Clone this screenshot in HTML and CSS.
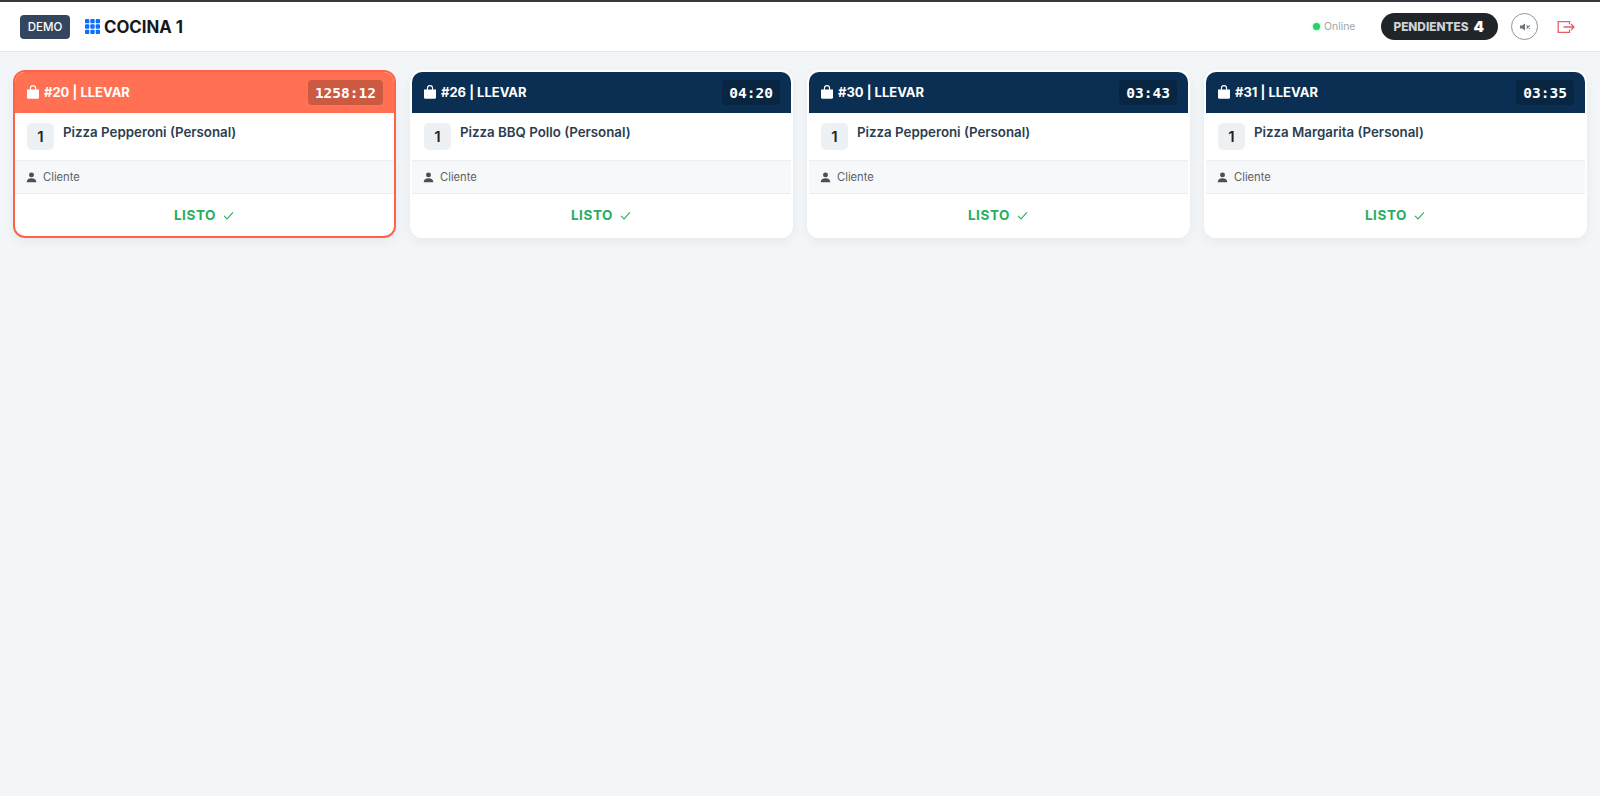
FILE: index.html
```html
<!DOCTYPE html>
<html>
    <head>
        <meta charset="utf-8">
        <title>Cocina 1</title>
        <link rel="stylesheet" href="styles.css">
    </head>
    <body>
        <header class="topbar">
            <div class="topbar-left">
                <span class="demo">DEMO</span>
                <h1 class="title">
                    <svg class="grid-icon" viewBox="0 0 16 16" width="15" height="15" fill="#0d6efd">
                        <rect x="0" y="0" width="4.6" height="4.6" rx="1"/><rect x="5.700" y="0" width="4.6" height="4.6" rx="1"/><rect x="11.400" y="0" width="4.6" height="4.6" rx="1"/>
                        <rect x="0" y="5.700" width="4.6" height="4.6" rx="1"/><rect x="5.700" y="5.700" width="4.6" height="4.6" rx="1"/><rect x="11.400" y="5.700" width="4.6" height="4.6" rx="1"/>
                        <rect x="0" y="11.400" width="4.6" height="4.6" rx="1"/><rect x="5.700" y="11.400" width="4.6" height="4.6" rx="1"/><rect x="11.400" y="11.400" width="4.6" height="4.6" rx="1"/>
                    </svg>
                    COCINA 1
                </h1>
            </div>
            <div class="topbar-right">
                <span class="status"><i class="dot"></i>Online</span>
                <span class="pending">PENDIENTES <b>4</b></span>
                <button class="sound" type="button">
                    <svg viewBox="0 0 16 16" width="14" height="14" fill="#6c757d">
                        <path d="M2.300 6.200H4.600L8 4v8L4.600 9.800H2.300z"/>
                        <path d="M9.800 6.200l3.600 3.600M13.400 6.200l-3.600 3.600" stroke="#6c757d" stroke-width="1.200" fill="none"/>
                    </svg>
                </button>
                <svg class="logout" viewBox="0 0 18 14" width="18" height="14" fill="none" stroke="#e85d6c" stroke-width="1.300">
                    <path d="M12.500 4.300V1.700H1.200v10.600h11.300V9.700"/>
                    <path d="M6.500 7H17M14 4l3 3-3 3"/>
                </svg>
            </div>
        </header>

        <main class="orders">
            <article class="card late">
                <div class="card-head">
                    <span class="order"><svg class="bag" viewBox="0 0 14 16" width="12" height="14" fill="#fff"><path d="M0 5h14v9.5a1.5 1.5 0 0 1-1.5 1.5h-11A1.500 1.500 0 0 1 0 14.500z"/><path d="M4 6V3.500a3 3 0 0 1 6 0V6" fill="none" stroke="#fff" stroke-width="1.300"/></svg>#20 | LLEVAR</span>
                    <span class="timer">1258:12</span>
                </div>
                <div class="item"><span class="qty">1</span><span class="name">Pizza Pepperoni (Personal)</span></div>
                <div class="client"><svg viewBox="0 0 16 16" width="11" height="11" fill="#495057"><circle cx="8" cy="4.200" r="3.600"/><path d="M1 15c0-4 3-5.800 7-5.800s7 1.800 7 5.800z"/></svg>Cliente</div>
                <div class="ready">LISTO <svg viewBox="0 0 16 16" width="13" height="13" fill="none" stroke="#27ae60" stroke-width="1.300"><path d="M2.500 8.500l3.700 3.700 7.300-8"/></svg></div>
            </article>

            <article class="card">
                <div class="card-head">
                    <span class="order"><svg class="bag" viewBox="0 0 14 16" width="12" height="14" fill="#fff"><path d="M0 5h14v9.5a1.5 1.5 0 0 1-1.5 1.5h-11A1.500 1.500 0 0 1 0 14.500z"/><path d="M4 6V3.500a3 3 0 0 1 6 0V6" fill="none" stroke="#fff" stroke-width="1.300"/></svg>#26 | LLEVAR</span>
                    <span class="timer">04:20</span>
                </div>
                <div class="item"><span class="qty">1</span><span class="name">Pizza BBQ Pollo (Personal)</span></div>
                <div class="client"><svg viewBox="0 0 16 16" width="11" height="11" fill="#495057"><circle cx="8" cy="4.200" r="3.600"/><path d="M1 15c0-4 3-5.800 7-5.800s7 1.800 7 5.800z"/></svg>Cliente</div>
                <div class="ready">LISTO <svg viewBox="0 0 16 16" width="13" height="13" fill="none" stroke="#27ae60" stroke-width="1.300"><path d="M2.500 8.500l3.700 3.700 7.300-8"/></svg></div>
            </article>

            <article class="card">
                <div class="card-head">
                    <span class="order"><svg class="bag" viewBox="0 0 14 16" width="12" height="14" fill="#fff"><path d="M0 5h14v9.5a1.5 1.5 0 0 1-1.5 1.5h-11A1.500 1.500 0 0 1 0 14.500z"/><path d="M4 6V3.500a3 3 0 0 1 6 0V6" fill="none" stroke="#fff" stroke-width="1.300"/></svg>#30 | LLEVAR</span>
                    <span class="timer">03:43</span>
                </div>
                <div class="item"><span class="qty">1</span><span class="name">Pizza Pepperoni (Personal)</span></div>
                <div class="client"><svg viewBox="0 0 16 16" width="11" height="11" fill="#495057"><circle cx="8" cy="4.200" r="3.600"/><path d="M1 15c0-4 3-5.800 7-5.800s7 1.800 7 5.800z"/></svg>Cliente</div>
                <div class="ready">LISTO <svg viewBox="0 0 16 16" width="13" height="13" fill="none" stroke="#27ae60" stroke-width="1.300"><path d="M2.500 8.500l3.700 3.700 7.300-8"/></svg></div>
            </article>

            <article class="card">
                <div class="card-head">
                    <span class="order"><svg class="bag" viewBox="0 0 14 16" width="12" height="14" fill="#fff"><path d="M0 5h14v9.5a1.5 1.5 0 0 1-1.5 1.5h-11A1.500 1.500 0 0 1 0 14.500z"/><path d="M4 6V3.500a3 3 0 0 1 6 0V6" fill="none" stroke="#fff" stroke-width="1.300"/></svg>#31 | LLEVAR</span>
                    <span class="timer">03:35</span>
                </div>
                <div class="item"><span class="qty">1</span><span class="name">Pizza Margarita (Personal)</span></div>
                <div class="client"><svg viewBox="0 0 16 16" width="11" height="11" fill="#495057"><circle cx="8" cy="4.200" r="3.600"/><path d="M1 15c0-4 3-5.800 7-5.800s7 1.800 7 5.800z"/></svg>Cliente</div>
                <div class="ready">LISTO <svg viewBox="0 0 16 16" width="13" height="13" fill="none" stroke="#27ae60" stroke-width="1.300"><path d="M2.500 8.500l3.700 3.700 7.300-8"/></svg></div>
            </article>
        </main>
    </body>
</html>
```

FILE: styles.css
```css
* {
    margin: 0;
    padding: 0;
    box-sizing: border-box;
}

html, body {
    height: 100%;
}

body {
    background: #f3f6f9;
    font-family: Inter, "Liberation Sans", sans-serif;
    overflow: hidden;
}

.topbar {
    height: 52px;
    background: #fff;
    border-top: 2px solid #343a40;
    border-bottom: 1px solid #e3e8ec;
    display: flex;
    justify-content: space-between;
    align-items: center;
    padding: 0 20px;
}

.topbar-left,
.topbar-right {
    display: flex;
    align-items: center;
}

.demo {
    width: 50px;
    height: 24px;
    background: #34465d;
    color: #fff;
    border-radius: 4px;
    font-size: 11.5px;
    font-weight: 500;
    display: flex;
    align-items: center;
    justify-content: center;
}

.title {
    margin-left: 15px;
    font-size: 16.8px;
    font-weight: 700;
    color: #15181c;
    display: flex;
    align-items: center;
    gap: 4px;
}

.status {
    font-size: 10.4px;
    color: #a0a6ac;
    display: flex;
    align-items: center;
    gap: 4px;
}

.dot {
    width: 7px;
    height: 7px;
    border-radius: 50%;
    background: #25d366;
    box-shadow: 0 0 3px rgba(37, 211, 102, 0.6);
}

.pending {
    margin-left: 26px;
    height: 27px;
    padding: 0 14px 0 12px;
    border-radius: 14px;
    background: #212529;
    color: #d0d2d4;
    font-size: 11.8px;
    font-weight: 800;
    display: flex;
    align-items: center;
    gap: 5px;
}

.pending b {
    color: #fff;
    font-size: 15px;
}

.sound {
    margin-left: 13px;
    width: 27px;
    height: 27px;
    border-radius: 50%;
    border: 1px solid #8f969c;
    background: #fff;
    display: flex;
    align-items: center;
    justify-content: center;
}

.logout {
    margin-left: 19px;
    margin-right: 5px;
}

.orders {
    display: grid;
    grid-template-columns: repeat(4, 1fr);
    gap: 14px;
    padding: 18px 13px;
    align-items: start;
}

.card {
    background: #fff;
    border-radius: 12px;
    border: 2px solid transparent;
    overflow: hidden;
    box-shadow: 0 4px 12px rgba(0, 0, 0, 0.05);
}

.card.late {
    border-color: #ff6347;
}

.card-head {
    height: 41px;
    background: #0a2f52;
    display: flex;
    justify-content: space-between;
    align-items: center;
    padding: 0 11px 0 12px;
}

.late .card-head {
    background: #ff7152;
}

.order {
    color: #fff;
    font-size: 13px;
    font-weight: 700;
    padding-bottom: 2px;
    display: flex;
    align-items: center;
    gap: 5px;
}

.timer {
    height: 25px;
    padding: 0 7px;
    border-radius: 4px;
    background: rgba(0, 0, 0, 0.2);
    color: #fff;
    font-family: "DejaVu Sans Mono", monospace;
    font-size: 14.5px;
    font-weight: 700;
    display: flex;
    align-items: center;
}

.item {
    height: 48px;
    padding: 10px 12px 0;
    display: flex;
    gap: 9px;
    border-bottom: 1px solid #eceff2;
}

.qty {
    width: 27px;
    height: 27px;
    border-radius: 5px;
    background: #eef1f4;
    color: #212529;
    font-size: 15px;
    font-weight: 600;
    display: flex;
    align-items: center;
    justify-content: center;
}

.name {
    color: #2c3e50;
    font-size: 13.3px;
    font-weight: 600;
    line-height: 19px;
}

.client {
    height: 33px;
    padding: 0 11px;
    background: #f7f8fa;
    border-bottom: 1px solid #eceff2;
    color: #5b6168;
    font-size: 11.2px;
    display: flex;
    align-items: center;
    gap: 6px;
}

.ready {
    height: 42px;
    color: #27ae60;
    font-size: 13.5px;
    font-weight: 700;
    letter-spacing: 0.6px;
    display: flex;
    align-items: center;
    justify-content: center;
    gap: 6px;
}
```
